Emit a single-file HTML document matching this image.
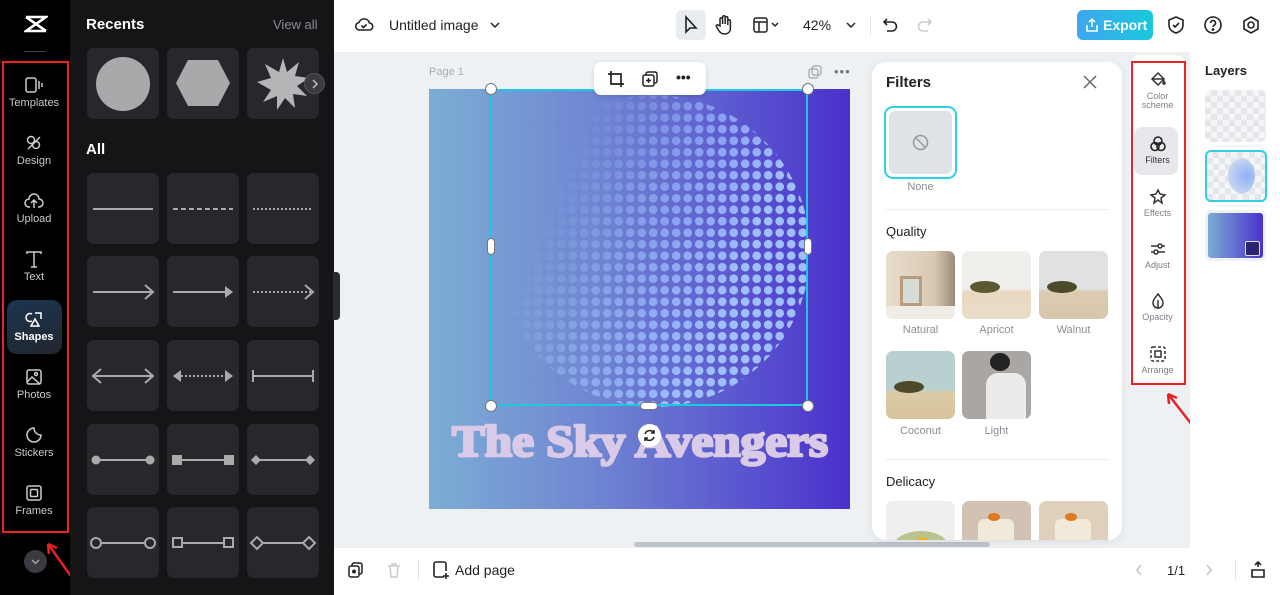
<!DOCTYPE html>
<html><head><meta charset="utf-8"><style>
*{box-sizing:border-box;margin:0;padding:0}
body{width:1280px;height:595px;overflow:hidden;position:relative;font-family:"Liberation Sans",sans-serif;background:#eef1f4}
.a{position:absolute}
.rail{left:0;top:0;width:70px;height:595px;background:#000}
.navi{position:absolute;left:6px;width:56px;height:54px;color:#c9c9cc;font-size:11px;text-align:center}
.navi svg{display:block;margin:8px auto 3px}
.panel{left:70px;top:0;width:264px;height:595px;background:#151518}
.tile{position:absolute;width:72px;height:71px;background:#27282c;border-radius:7px}
.tile svg{position:absolute;left:0;top:0}
.filt{left:872px;top:62px;width:250px;height:478px;background:#fff;border-radius:14px;box-shadow:0 2px 10px rgba(0,0,0,.08);overflow:hidden}
.th{position:absolute;width:69px;height:68px;border-radius:7px;overflow:hidden}
.lbl{position:absolute;width:69px;text-align:center;font-size:11px;color:#8b8e94}
.side{position:absolute;left:1135px;width:45px;text-align:center;font-size:9px;color:#7b7f86;line-height:9px}
.side svg{display:block;margin:0 auto 3px}
</style></head><body>
<!-- top bar -->
<div class="a" style="left:334px;top:0;width:946px;height:52px;background:#fff"></div>
<svg class="a" style="left:354px;top:15px" width="20" height="20" viewBox="0 0 20 20" fill="none" stroke="#222" stroke-width="1.6"><path d="M5 15h10a3.5 3.5 0 0 0 .5-7A5.5 5.5 0 0 0 5 7.5 3.8 3.8 0 0 0 5 15z"/><path d="M7.5 10.5l2 2 3-3"/></svg>
<div class="a" style="left:389px;top:17px;font-size:14px;color:#222">Untitled image</div>
<svg class="a" style="left:489px;top:19px" width="12" height="12" viewBox="0 0 12 12" fill="none" stroke="#222" stroke-width="1.5"><path d="M2 4l4 4 4-4"/></svg>
<div class="a" style="left:676px;top:10px;width:30px;height:30px;background:#e9ecf0;border-radius:6px"></div>
<svg class="a" style="left:683px;top:15px" width="16" height="20" viewBox="0 0 16 20" fill="none" stroke="#222" stroke-width="1.6"><path d="M3 2v15l4-4h6z"/></svg>
<svg class="a" style="left:715px;top:14px" width="18" height="22" viewBox="0 0 18 22" fill="none" stroke="#222" stroke-width="1.5"><path d="M5 12V5a1.3 1.3 0 0 1 2.6 0v5V3a1.3 1.3 0 0 1 2.6 0v7V4a1.3 1.3 0 0 1 2.6 0v7-4a1.3 1.3 0 0 1 2.6 0v7c0 4-2.5 6-6 6-3 0-4.5-1.5-6-4l-2-3.5a1.3 1.3 0 0 1 2.2-1.3z"/></svg>
<svg class="a" style="left:752px;top:16px" width="30" height="18" viewBox="0 0 30 18" fill="none" stroke="#222" stroke-width="1.5"><rect x="2" y="2" width="13" height="14" rx="2"/><path d="M2 6h13M7 6v10M20 7l3 3 3-3"/></svg>
<div class="a" style="left:803px;top:17px;font-size:14px;color:#222">42%</div>
<svg class="a" style="left:845px;top:19px" width="12" height="12" viewBox="0 0 12 12" fill="none" stroke="#222" stroke-width="1.5"><path d="M2 4l4 4 4-4"/></svg>
<div class="a" style="left:870px;top:16px;width:1px;height:20px;background:#e0e2e6"></div>
<svg class="a" style="left:882px;top:16px" width="18" height="18" viewBox="0 0 18 18" fill="none" stroke="#222" stroke-width="1.6"><path d="M5 3L2 6l3 3M2 6h8a4.5 4.5 0 0 1 0 9H5"/></svg>
<svg class="a" style="left:915px;top:16px" width="18" height="18" viewBox="0 0 18 18" fill="none" stroke="#ccc" stroke-width="1.6"><path d="M13 3l3 3-3 3M16 6H8a4.5 4.5 0 0 0 0 9h5"/></svg>
<div class="a" style="left:1077px;top:10px;width:76px;height:30px;border-radius:6px;background:linear-gradient(90deg,#3fa6f0,#19c8dc);color:#fff;font-size:14px;font-weight:bold;line-height:30px;padding-left:26px">Export</div>
<svg class="a" style="left:1085px;top:17px" width="14" height="16" viewBox="0 0 14 16" fill="none" stroke="#fff" stroke-width="1.5"><path d="M7 10V2M4 5l3-3 3 3M2 8v6h10V8"/></svg>
<svg class="a" style="left:1166px;top:15px" width="20" height="20" viewBox="0 0 20 20" fill="none" stroke="#222" stroke-width="1.6"><path d="M10 2l7 3v5c0 4-3 7-7 8-4-1-7-4-7-8V5z"/><path d="M7 10l2 2 4-4"/></svg>
<svg class="a" style="left:1203px;top:15px" width="20" height="20" viewBox="0 0 20 20" fill="none" stroke="#222" stroke-width="1.6"><circle cx="10" cy="10" r="8"/><path d="M7.5 8a2.5 2.5 0 1 1 3.5 2.3c-.7.4-1 .9-1 1.7"/><circle cx="10" cy="14.5" r=".6" fill="#222"/></svg>
<svg class="a" style="left:1241px;top:15px" width="20" height="20" viewBox="0 0 20 20" fill="none" stroke="#222" stroke-width="1.6"><path d="M10 2l7 4v8l-7 4-7-4V6z"/><circle cx="10" cy="10" r="3"/></svg>

<!-- rail -->
<div class="a rail"></div>
<svg class="a" style="left:24px;top:14px" width="24" height="20" viewBox="0 0 24 20" fill="none" stroke="#fff" stroke-width="2.6"><path d="M2 3h20L2 17h20M2 3l20 14"/></svg>
<div class="a" style="left:24px;top:51px;width:22px;height:1px;background:#444"></div>
<div class="a" style="left:2px;top:61px;width:67px;height:472px;border:2px solid #ee2222"></div>
<div class="navi" style="top:68px"><svg width="20" height="18" viewBox="0 0 20 18" fill="none" stroke="#ccc" stroke-width="1.5"><rect x="2" y="2" width="10" height="14" rx="2"/><path d="M15 5v8M18 7v4"/></svg>Templates</div>
<div class="navi" style="top:126px"><svg width="20" height="18" viewBox="0 0 20 18" fill="none" stroke="#ccc" stroke-width="1.5"><circle cx="7" cy="6" r="3.5"/><circle cx="12" cy="11" r="3.5"/><path d="M4 15l12-12"/></svg>Design</div>
<div class="navi" style="top:184px"><svg width="20" height="18" viewBox="0 0 20 18" fill="none" stroke="#ccc" stroke-width="1.5"><path d="M6 15H5a4 4 0 0 1 0-8 5 5 0 0 1 10 0 4 4 0 0 1 0 8h-1M10 16V9M7 11l3-3 3 3"/></svg>Upload</div>
<div class="navi" style="top:242px"><svg width="20" height="18" viewBox="0 0 20 18" fill="none" stroke="#ccc" stroke-width="1.5"><path d="M3 4V2h14v2M10 2v15M7 17h6"/></svg>Text</div>
<div class="a" style="left:7px;top:300px;width:55px;height:54px;border-radius:10px;background:linear-gradient(160deg,#1b3550,#22262e)"></div>
<div class="navi" style="top:302px;color:#fff;font-weight:bold"><svg width="20" height="18" viewBox="0 0 20 18" fill="none" stroke="#fff" stroke-width="1.5"><path d="M8 4a4 4 0 1 0 0 7M11 3h6v6M11 9l-4 7h8z"/></svg>Shapes</div>
<div class="navi" style="top:360px"><svg width="20" height="18" viewBox="0 0 20 18" fill="none" stroke="#ccc" stroke-width="1.5"><rect x="3" y="2" width="14" height="14" rx="2"/><circle cx="12" cy="6" r="1.5"/><path d="M3 14l5-5 8 7"/></svg>Photos</div>
<div class="navi" style="top:418px"><svg width="20" height="18" viewBox="0 0 20 18" fill="none" stroke="#ccc" stroke-width="1.5"><path d="M10 2a7 7 0 1 0 7 7c-4 0-7-3-7-7z"/></svg>Stickers</div>
<div class="navi" style="top:476px"><svg width="20" height="18" viewBox="0 0 20 18" fill="none" stroke="#ccc" stroke-width="1.5"><rect x="3" y="2" width="14" height="14" rx="2"/><rect x="6.5" y="5.5" width="7" height="7" rx="1"/></svg>Frames</div>
<div class="a" style="left:24px;top:550px;width:23px;height:23px;border-radius:50%;background:#3a3b40"></div>
<svg class="a" style="left:30px;top:557px" width="11" height="9" viewBox="0 0 11 9" fill="none" stroke="#aaa" stroke-width="1.3"><path d="M2 3l3.5 3.5L9 3"/></svg>
<svg class="a" style="left:40px;top:535px" width="40" height="50" viewBox="0 0 40 50" fill="none" stroke="#e82222" stroke-width="2.5"><path d="M33 44L8 9M8 9l1 10M8 9l9 4"/></svg>

<!-- panel -->
<div class="a panel"></div>
<div class="a" style="left:86px;top:16px;font-size:15px;font-weight:bold;color:#fff">Recents</div>
<div class="a" style="left:273px;top:17px;font-size:13px;color:#8a8a90">View all</div>
<div class="tile" style="left:87px;top:48px"><svg width="72" height="71"><circle cx="36" cy="36" r="27" fill="#a9a9ab"/></svg></div>
<div class="tile" style="left:167px;top:48px"><svg width="72" height="71"><polygon points="21,12 51,12 63,35 51,58 21,58 9,35" fill="#a9a9ab"/></svg></div>
<div class="tile" style="left:247px;top:48px"><svg width="72" height="71"><polygon points="36,10 40,24 52,14 48,28 62,30 50,38 60,48 46,46 48,60 38,50 30,62 30,48 16,54 24,42 10,34 24,30 18,16 32,24" fill="#b5b5b7"/></svg></div>
<div class="a" style="left:304px;top:73px;width:21px;height:21px;border-radius:50%;background:#3a3b40;border:1px solid #555"></div>
<svg class="a" style="left:310px;top:78px" width="10" height="12" viewBox="0 0 10 12" fill="none" stroke="#ccc" stroke-width="1.3"><path d="M3 2l4 4-4 4"/></svg>
<div class="a" style="left:86px;top:141px;font-size:15px;font-weight:bold;color:#fff">All</div>
<div class="tile" style="left:87px;top:173px"><svg width="72" height="71"><path d="M6 36h60" stroke="#aaa" stroke-width="2"/></svg></div>
<div class="tile" style="left:167px;top:173px"><svg width="72" height="71"><path d="M6 36h60" stroke="#aaa" stroke-width="2" stroke-dasharray="5 3"/></svg></div>
<div class="tile" style="left:247px;top:173px"><svg width="72" height="71"><path d="M6 36h60" stroke="#aaa" stroke-width="2" stroke-dasharray="2 2"/></svg></div>
<div class="tile" style="left:87px;top:256px"><svg width="72" height="71"><path d="M6 36h60M58 29l8 7-8 7" stroke="#aaa" stroke-width="2" fill="none"/></svg></div>
<div class="tile" style="left:167px;top:256px"><svg width="72" height="71"><path d="M6 36h54" stroke="#aaa" stroke-width="2"/><path d="M58 30l8 6-8 6z" fill="#aaa"/></svg></div>
<div class="tile" style="left:247px;top:256px"><svg width="72" height="71"><path d="M6 36h60" stroke="#aaa" stroke-width="2" stroke-dasharray="2 2"/><path d="M58 29l8 7-8 7" stroke="#aaa" stroke-width="2" fill="none"/></svg></div>
<div class="tile" style="left:87px;top:340px"><svg width="72" height="71"><path d="M6 36h60M14 29l-8 7 8 7M58 29l8 7-8 7" stroke="#aaa" stroke-width="2" fill="none"/></svg></div>
<div class="tile" style="left:167px;top:340px"><svg width="72" height="71"><path d="M14 36h44" stroke="#aaa" stroke-width="2" stroke-dasharray="2 2"/><path d="M58 30l8 6-8 6zM14 30l-8 6 8 6z" fill="#aaa"/></svg></div>
<div class="tile" style="left:247px;top:340px"><svg width="72" height="71"><path d="M6 36h60M6 30v12M66 30v12" stroke="#aaa" stroke-width="2"/></svg></div>
<div class="tile" style="left:87px;top:424px"><svg width="72" height="71"><path d="M9 36h54" stroke="#aaa" stroke-width="2"/><circle cx="9" cy="36" r="4.5" fill="#aaa"/><circle cx="63" cy="36" r="4.5" fill="#aaa"/></svg></div>
<div class="tile" style="left:167px;top:424px"><svg width="72" height="71"><path d="M9 36h54" stroke="#aaa" stroke-width="2"/><rect x="5" y="31" width="10" height="10" fill="#aaa"/><rect x="57" y="31" width="10" height="10" fill="#aaa"/></svg></div>
<div class="tile" style="left:247px;top:424px"><svg width="72" height="71"><path d="M9 36h54" stroke="#aaa" stroke-width="2"/><path d="M4 36l5-5 5 5-5 5zM58 36l5-5 5 5-5 5z" fill="#aaa"/></svg></div>
<div class="tile" style="left:87px;top:507px"><svg width="72" height="71"><path d="M14 36h44" stroke="#aaa" stroke-width="2"/><circle cx="9" cy="36" r="5" stroke="#aaa" stroke-width="2" fill="none"/><circle cx="63" cy="36" r="5" stroke="#aaa" stroke-width="2" fill="none"/></svg></div>
<div class="tile" style="left:167px;top:507px"><svg width="72" height="71"><path d="M14 36h44" stroke="#aaa" stroke-width="2"/><rect x="6" y="31" width="9" height="9" stroke="#aaa" stroke-width="2" fill="none"/><rect x="57" y="31" width="9" height="9" stroke="#aaa" stroke-width="2" fill="none"/></svg></div>
<div class="tile" style="left:247px;top:507px"><svg width="72" height="71"><path d="M16 36h40" stroke="#aaa" stroke-width="2"/><path d="M4 36l6-6 6 6-6 6zM56 36l6-6 6 6-6 6z" stroke="#aaa" stroke-width="2" fill="none"/></svg></div>
<div class="a" style="left:333px;top:272px;width:7px;height:48px;background:#2a2b30;border-radius:0 4px 4px 0"></div>

<!-- canvas -->
<div class="a" style="left:429px;top:66px;font-size:11px;color:#a8acb2">Page 1</div>
<svg class="a" style="left:808px;top:65px" width="14" height="14" viewBox="0 0 14 14" fill="none" stroke="#9aa" stroke-width="1.2"><rect x="4" y="1" width="9" height="9" rx="2"/><rect x="1" y="4" width="9" height="9" rx="2"/></svg>
<div class="a" style="left:834px;top:64px;font-size:13px;color:#777;letter-spacing:1px">•••</div>
<div class="a" style="left:429px;top:89px;width:421px;height:420px;background:linear-gradient(90deg,#7cadd5,#6f85d1 40%,#5d5ccf 70%,#4a30cc)"></div>
<svg class="a" style="left:429px;top:89px" width="421" height="420" viewBox="0 0 421 420">
<defs>
<pattern id="dots" width="11.5" height="11.5" patternUnits="userSpaceOnUse"><circle cx="5.7" cy="5.7" r="4.3" fill="#9fc0ff"/></pattern>
<linearGradient id="fade" gradientUnits="userSpaceOnUse" x1="140" y1="60" x2="330" y2="140"><stop offset="0" stop-color="#000"/><stop offset=".45" stop-color="#888"/><stop offset="1" stop-color="#fff"/></linearGradient>
<mask id="m" maskUnits="userSpaceOnUse" x="0" y="0" width="421" height="420"><circle cx="225" cy="162" r="156" fill="url(#fade)"/></mask>
</defs>
<rect x="60" y="0" width="330" height="330" fill="url(#dots)" mask="url(#m)"/>
<text x="23" y="367" font-family="Liberation Serif,serif" font-weight="bold" font-size="44" fill="#d9cbe8" stroke="#d9cbe8" stroke-width="2.6" stroke-linejoin="round" textLength="376" lengthAdjust="spacingAndGlyphs">The Sky Avengers</text>
</svg>
<div class="a" style="left:490px;top:89px;width:318px;height:317px;border:2px solid #1ec8e0"></div>
<div class="a" style="left:485px;top:83px;width:12px;height:12px;border-radius:50%;background:#fff;border:1px solid #777"></div>
<div class="a" style="left:802px;top:83px;width:12px;height:12px;border-radius:50%;background:#fff;border:1px solid #777"></div>
<div class="a" style="left:485px;top:400px;width:12px;height:12px;border-radius:50%;background:#fff;border:1px solid #777"></div>
<div class="a" style="left:802px;top:400px;width:12px;height:12px;border-radius:50%;background:#fff;border:1px solid #777"></div>
<div class="a" style="left:487px;top:238px;width:8px;height:17px;border-radius:4px;background:#fff;border:1px solid #777"></div>
<div class="a" style="left:804px;top:238px;width:8px;height:17px;border-radius:4px;background:#fff;border:1px solid #777"></div>
<div class="a" style="left:640px;top:402px;width:18px;height:8px;border-radius:4px;background:#fff;border:1px solid #777"></div>
<div class="a" style="left:638px;top:424px;width:23px;height:23px;border-radius:50%;background:#fff"></div>
<svg class="a" style="left:642px;top:428px" width="15" height="15" viewBox="0 0 15 15" fill="none" stroke="#222" stroke-width="1.5"><path d="M3 6a5 5 0 0 1 9-1M12 9a5 5 0 0 1-9 1M12 2v3H9M3 13v-3h3"/></svg>
<div class="a" style="left:594px;top:62px;width:112px;height:33px;background:#fff;border-radius:7px;box-shadow:0 1px 4px rgba(0,0,0,.15)"></div>
<svg class="a" style="left:607px;top:70px" width="18" height="18" viewBox="0 0 18 18" fill="none" stroke="#222" stroke-width="1.7"><path d="M4 1v13h13M1 4h13v13"/></svg>
<svg class="a" style="left:641px;top:70px" width="18" height="18" viewBox="0 0 18 18" fill="none" stroke="#222" stroke-width="1.5"><rect x="5" y="2" width="11" height="11" rx="2"/><rect x="2" y="5" width="11" height="11" rx="2" fill="#fff"/><path d="M7.5 8v5M5 10.5h5"/></svg>
<div class="a" style="left:676px;top:69px;font-size:14px;font-weight:bold;color:#222;letter-spacing:0">•••</div>
<div class="a" style="left:634px;top:542px;width:356px;height:5px;border-radius:3px;background:#bfc4c9"></div>

<!-- filters -->
<div class="a filt">
<div class="a" style="left:14px;top:12px;font-size:15px;font-weight:bold;color:#222">Filters</div>
<svg class="a" style="left:211px;top:13px" width="14" height="14" viewBox="0 0 14 14" stroke="#666" stroke-width="1.5"><path d="M1 1l12 12M13 1L1 13"/></svg>
<div class="a" style="left:12px;top:44px;width:73px;height:73px;border:2px solid #2ed1e4;border-radius:9px;padding:3px"><div style="width:100%;height:100%;background:#dfe2e6;border-radius:6px"></div></div>
<svg class="a" style="left:40px;top:72px" width="17" height="17" viewBox="0 0 17 17" fill="none" stroke="#999" stroke-width="1.5"><circle cx="8.5" cy="8.5" r="7"/><path d="M4 4l9 9"/></svg>
<div class="lbl" style="left:14px;top:119px">None</div>
<div class="a" style="left:14px;top:147px;width:222px;height:1px;background:#ececef"></div>
<div class="a" style="left:14px;top:162px;font-size:13px;color:#222">Quality</div>
<div class="th" style="left:14px;top:189px;background:linear-gradient(90deg,#e8dccb,#d8c9b3 70%,#9a8a7a)"><div class="a" style="left:14px;top:25px;width:22px;height:30px;border:3px solid #b89c7c;background:#d5dbd6"></div><div class="a" style="left:0;top:55px;width:69px;height:13px;background:#f0ece6"></div></div>
<div class="th" style="left:90px;top:189px;background:linear-gradient(#f1efec 55%,#ead9c0 60%,#e9dcc8)"><div class="a" style="left:8px;top:30px;width:30px;height:12px;background:#5b5a34;border-radius:50%"></div></div>
<div class="th" style="left:167px;top:189px;background:linear-gradient(#dfe2e1 55%,#dccbb2 60%,#d6c6ac)"><div class="a" style="left:8px;top:30px;width:30px;height:12px;background:#4d4a2a;border-radius:50%"></div></div>
<div class="lbl" style="left:14px;top:262px">Natural</div>
<div class="lbl" style="left:90px;top:262px">Apricot</div>
<div class="lbl" style="left:167px;top:262px">Walnut</div>
<div class="th" style="left:14px;top:289px;background:linear-gradient(#b8d0d0 55%,#dccba8 62%,#d8c49c)"><div class="a" style="left:8px;top:30px;width:30px;height:12px;background:#4d4a2a;border-radius:50%"></div></div>
<div class="th" style="left:90px;top:289px;background:#a9a6a3"><div class="a" style="left:28px;top:2px;width:20px;height:18px;background:#222;border-radius:50%"></div><div class="a" style="left:24px;top:22px;width:40px;height:46px;background:#ecebea;border-radius:12px 12px 0 0"></div></div>
<div class="lbl" style="left:14px;top:363px">Coconut</div>
<div class="lbl" style="left:90px;top:363px">Light</div>
<div class="a" style="left:14px;top:397px;width:222px;height:1px;background:#ececef"></div>
<div class="a" style="left:14px;top:412px;font-size:13px;color:#222">Delicacy</div>
<div class="th" style="left:14px;top:439px;background:#f0eeee"><div class="a" style="left:8px;top:30px;width:54px;height:30px;border-radius:50%;background:#b8c48a"></div><div class="a" style="left:30px;top:36px;width:12px;height:10px;border-radius:50%;background:#f0b020"></div></div>
<div class="th" style="left:90px;top:439px;background:#d2c2b3"><div class="a" style="left:16px;top:18px;width:36px;height:30px;background:#f1ead8;border-radius:6px"></div><div class="a" style="left:26px;top:12px;width:12px;height:8px;background:#e07a20;border-radius:50%"></div></div>
<div class="th" style="left:167px;top:439px;background:#dfd0bc"><div class="a" style="left:16px;top:18px;width:36px;height:30px;background:#f1ead8;border-radius:6px"></div><div class="a" style="left:26px;top:12px;width:12px;height:8px;background:#e07a20;border-radius:50%"></div></div>
</div>

<!-- side strip -->
<div class="a" style="left:1130px;top:55px;width:55px;height:330px;background:#fff;border-radius:10px"></div>
<div class="a" style="left:1131px;top:61px;width:55px;height:324px;border:2px solid #ee2222"></div>
<div class="a" style="left:1134px;top:127px;width:44px;height:48px;background:#e6e8eb;border-radius:8px"></div>
<div class="side" style="top:71px"><svg width="18" height="18" viewBox="0 0 18 18" fill="none" stroke="#333" stroke-width="1.5"><path d="M3 8l6-6 6 6-6 6z"/><path d="M3 8h12" /><path d="M16 12c0 1.5-2 1.5-2 0l1-2z" fill="#333"/></svg>Color<br>scheme</div>
<div class="side" style="top:135px;color:#333"><svg width="18" height="18" viewBox="0 0 18 18" fill="none" stroke="#222" stroke-width="1.6"><circle cx="9" cy="6" r="4"/><circle cx="6" cy="11.5" r="4"/><circle cx="12" cy="11.5" r="4"/></svg>Filters</div>
<div class="side" style="top:188px"><svg width="18" height="18" viewBox="0 0 18 18" fill="none" stroke="#333" stroke-width="1.5"><path d="M9 2l2 4 5 1-4 3 1 5-4-3-4 3 1-5-4-3 5-1z"/></svg>Effects</div>
<div class="side" style="top:240px"><svg width="18" height="18" viewBox="0 0 18 18" fill="none" stroke="#333" stroke-width="1.5"><path d="M2 6h14M2 12h14"/><circle cx="11" cy="6" r="2" fill="#fff"/><circle cx="7" cy="12" r="2" fill="#fff"/></svg>Adjust</div>
<div class="side" style="top:292px"><svg width="18" height="18" viewBox="0 0 18 18" fill="none" stroke="#333" stroke-width="1.5"><path d="M9 2c3 4 5 6 5 9a5 5 0 0 1-10 0c0-3 2-5 5-9z"/><path d="M9 8v8"/></svg>Opacity</div>
<div class="side" style="top:345px"><svg width="18" height="18" viewBox="0 0 18 18" fill="none" stroke="#333" stroke-width="1.5" stroke-dasharray="3 2"><rect x="2" y="2" width="14" height="14" rx="2"/><rect x="6" y="6" width="6" height="6" stroke-dasharray="none"/></svg>Arrange</div>
<svg class="a" style="left:1160px;top:388px" width="40" height="45" viewBox="0 0 40 45" fill="none" stroke="#e82222" stroke-width="2.5"><path d="M36 42L8 6M8 6l1 10M8 6l9 4"/></svg>

<!-- layers -->
<div class="a" style="left:1190px;top:52px;width:90px;height:496px;background:#fff"></div>
<div class="a" style="left:1205px;top:63px;font-size:13px;font-weight:bold;color:#222">Layers</div>
<div class="a" style="left:1205px;top:90px;width:61px;height:52px;border-radius:6px;background:repeating-conic-gradient(#e4e6e9 0 25%,#f4f5f6 0 50%) 0 0/12px 12px"></div>
<div class="a" style="left:1205px;top:150px;width:62px;height:52px;border:2px solid #2ed1e4;border-radius:6px;background:repeating-conic-gradient(#e4e6e9 0 25%,#f4f5f6 0 50%) 0 0/12px 12px"><div class="a" style="left:20px;top:6px;width:28px;height:36px;border-radius:50%;background:radial-gradient(circle at 70% 50%,#8fb0f0,#c7d6f5 70%,transparent 72%)"></div></div>
<div class="a" style="left:1205px;top:210px;width:61px;height:51px;border-radius:6px;border:3px solid #f1f2f4;background:linear-gradient(90deg,#7cadd5,#4a30cc)"></div>
<div class="a" style="left:1245px;top:241px;width:15px;height:15px;background:#2a2570;border:1px solid #ddd;border-radius:2px"></div>

<!-- bottom bar -->
<div class="a" style="left:334px;top:548px;width:946px;height:47px;background:#fff"></div>
<svg class="a" style="left:347px;top:561px" width="18" height="18" viewBox="0 0 18 18" fill="none" stroke="#222" stroke-width="1.5"><rect x="5" y="2" width="10" height="11" rx="2"/><rect x="2" y="5" width="10" height="11" rx="2" fill="#fff"/><circle cx="7" cy="10.5" r="1.2" fill="#222"/></svg>
<svg class="a" style="left:386px;top:561px" width="16" height="18" viewBox="0 0 16 18" fill="none" stroke="#ccc" stroke-width="1.5"><path d="M2 5h12M6 5V3h4v2M4 5l1 11h6l1-11"/></svg>
<div class="a" style="left:418px;top:560px;width:1px;height:20px;background:#e0e2e6"></div>
<svg class="a" style="left:432px;top:560px" width="18" height="20" viewBox="0 0 18 20" fill="none" stroke="#222" stroke-width="1.6"><path d="M12 17H4a2 2 0 0 1-2-2V4a2 2 0 0 1 2-2h8a2 2 0 0 1 2 2v7M14 13v6M11 16h6"/></svg>
<div class="a" style="left:455px;top:562px;font-size:14px;color:#222">Add page</div>
<svg class="a" style="left:1134px;top:563px" width="10" height="14" viewBox="0 0 10 14" fill="none" stroke="#bbb" stroke-width="1.4"><path d="M7 2L3 7l4 5"/></svg>
<div class="a" style="left:1167px;top:563px;font-size:13px;color:#222">1/1</div>
<svg class="a" style="left:1204px;top:563px" width="10" height="14" viewBox="0 0 10 14" fill="none" stroke="#bbb" stroke-width="1.4"><path d="M3 2l4 5-4 5"/></svg>
<div class="a" style="left:1235px;top:560px;width:1px;height:20px;background:#e0e2e6"></div>
<svg class="a" style="left:1249px;top:560px" width="18" height="20" viewBox="0 0 18 20" fill="none" stroke="#222" stroke-width="1.6"><path d="M3 10h12v7H3zM9 2v5M6 5l3-3 3 3"/></svg>
</body></html>
